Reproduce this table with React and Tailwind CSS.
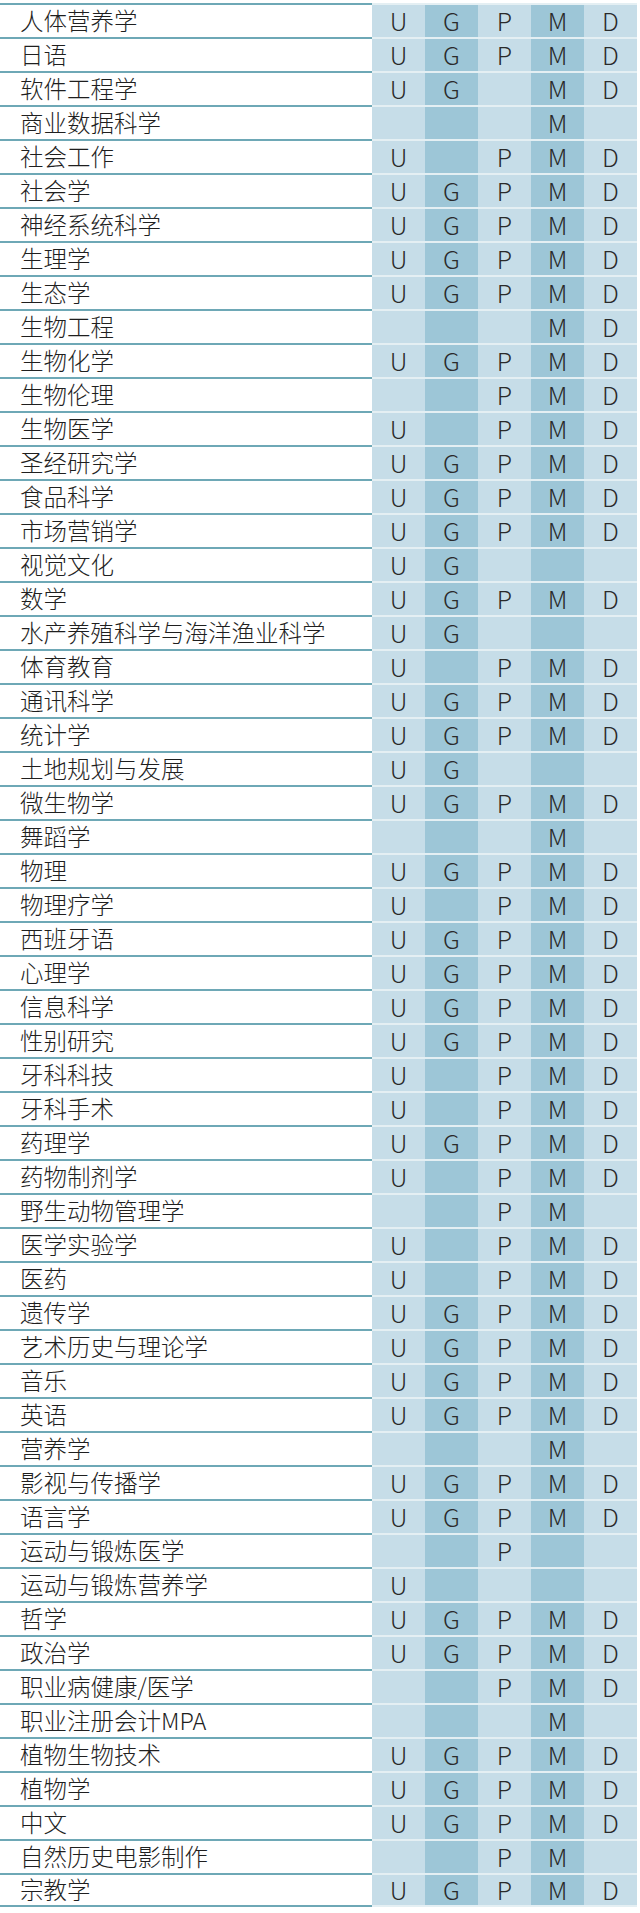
import React from 'react';

const rows = [
    ['人体营养学', 'UGPMD'],
    ['日语', 'UGPMD'],
    ['软件工程学', 'UG MD'],
    ['商业数据科学', '   M '],
    ['社会工作', 'U PMD'],
    ['社会学', 'UGPMD'],
    ['神经系统科学', 'UGPMD'],
    ['生理学', 'UGPMD'],
    ['生态学', 'UGPMD'],
    ['生物工程', '   MD'],
    ['生物化学', 'UGPMD'],
    ['生物伦理', '  PMD'],
    ['生物医学', 'U PMD'],
    ['圣经研究学', 'UGPMD'],
    ['食品科学', 'UGPMD'],
    ['市场营销学', 'UGPMD'],
    ['视觉文化', 'UG   '],
    ['数学', 'UGPMD'],
    ['水产养殖科学与海洋渔业科学', 'UG   '],
    ['体育教育', 'U PMD'],
    ['通讯科学', 'UGPMD'],
    ['统计学', 'UGPMD'],
    ['土地规划与发展', 'UG   '],
    ['微生物学', 'UGPMD'],
    ['舞蹈学', '   M '],
    ['物理', 'UGPMD'],
    ['物理疗学', 'U PMD'],
    ['西班牙语', 'UGPMD'],
    ['心理学', 'UGPMD'],
    ['信息科学', 'UGPMD'],
    ['性别研究', 'UGPMD'],
    ['牙科科技', 'U PMD'],
    ['牙科手术', 'U PMD'],
    ['药理学', 'UGPMD'],
    ['药物制剂学', 'U PMD'],
    ['野生动物管理学', '  PM '],
    ['医学实验学', 'U PMD'],
    ['医药', 'U PMD'],
    ['遗传学', 'UGPMD'],
    ['艺术历史与理论学', 'UGPMD'],
    ['音乐', 'UGPMD'],
    ['英语', 'UGPMD'],
    ['营养学', '   M '],
    ['影视与传播学', 'UGPMD'],
    ['语言学', 'UGPMD'],
    ['运动与锻炼医学', '  P  '],
    ['运动与锻炼营养学', 'U    '],
    ['哲学', 'UGPMD'],
    ['政治学', 'UGPMD'],
    ['职业病健康/医学', '  PMD'],
    ['职业注册会计MPA', '   M '],
    ['植物生物技术', 'UGPMD'],
    ['植物学', 'UGPMD'],
    ['中文', 'UGPMD'],
    ['自然历史电影制作', '  PM '],
    ['宗教学', 'UGPMD'],
];

// U, P, D light; G, M darker
const shades = ['bg-[#c6dde8]', 'bg-[#9dc6d7]', 'bg-[#c6dde8]', 'bg-[#9dc6d7]', 'bg-[#c6dde8]'];

const Row = ({ name, marks, last }) => (
    <div className="flex h-[34px]">
        <div
            className={
                'w-[372px] flex items-center pl-[20px] border-t-2 border-[#6ea8b6] text-[23.5px] font-light text-[#1f1f1f] ' +
                (last ? 'border-b-2' : '')
            }
        >
            {name}
        </div>
        {marks.split('').map((m, i) => (
            <div
                key={i}
                className={
                    'w-[53px] flex items-center justify-center border-t-2 border-[#e4eff3] text-[25px] font-light text-[#2a2a2a] ' +
                    shades[i] +
                    (last ? ' border-b-2' : '')
                }
            >
                {m.trim()}
            </div>
        ))}
    </div>
);

export default function App() {
    return (
        <div
            className="w-[640px] bg-white pt-[3px] pb-[2px]"
            style={{ fontFamily: '"Noto Sans CJK SC", "Noto Sans", sans-serif' }}
        >
            {rows.map(([name, marks], i) => (
                <Row key={name} name={name} marks={marks} last={i === rows.length - 1} />
            ))}
        </div>
    );
}
